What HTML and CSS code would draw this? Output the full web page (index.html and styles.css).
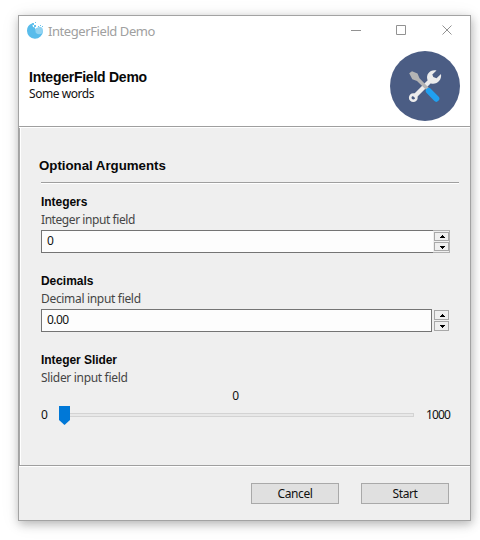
FILE: index.html
```html
<!DOCTYPE html>
<html lang="en">
<head>
<meta charset="utf-8">
<title>IntegerField Demo</title>
<link rel="stylesheet" href="styles.css">
</head>
<body>
<main class="window">
  <div class="titlebar">
    <svg class="app-icon" width="17" height="17" viewBox="0 0 17 17">
      <path d="M5 1.500C2 2.500 0 5 0 8.500a8 8 0 0 0 16 .5L15 8C11 10 8 8 8 5.500L6 5Z" fill="#58bceb"/>
      <circle cx="12.200" cy="8.500" r="3.800" fill="#91d3f2"/>
      <path d="M8 3h4v2l-3 1H8z" fill="#fff"/>
      <path d="M5 1h2v2H5zM7 3h2v2H7zM8 0h1v1H8zM13 3h1v1h-1zM11 4h1v1h-1zM15 4h1v1h-1z" fill="#69c3ed"/>
    </svg>
    <span class="caption">IntegerField Demo</span>
    <svg class="controls" width="102" height="12" viewBox="0 0 102 12" fill="none" stroke="#929292">
      <path d="M0 6.500h10M45.500 1.500h9v9h-9zM91.500 1.500l9 9M100.500 1.500l-9 9"/>
    </svg>
  </div>
  <header class="header">
    <div class="heading">
      <h1>IntegerField Demo</h1>
      <p>Some words</p>
    </div>
    <svg class="tools" width="70" height="70" viewBox="0 0 70 70">
      <circle cx="35" cy="35" r="35" fill="#4b5d84"/>
      <path d="M24 46 41 29" stroke="#ececec" stroke-width="4.500"/>
      <circle cx="23.300" cy="46.700" r="3.100" fill="none" stroke="#ececec" stroke-width="2.600"/>
      <path d="M46.500 19.500C40.500 18 35.500 23 37.500 29L41 32.500C47 34 52 29 51 23L46.500 27.200 43.300 26 42.300 23.500Z" fill="#ececec"/>
      <path d="M19.200 22.200 22 20.200 27.500 22.500 29.500 27.200 39.200 37.200 36.800 39.500 27 30 22.300 28.200Z" fill="#b4b4b4"/>
      <path d="m38.800 40 7.500 7.700" stroke="#20a0f0" stroke-width="6" stroke-linecap="round"/>
    </svg>
  </header>
  <section class="content">
    <h2>Optional Arguments</h2>
    <div class="field">
      <h3>Integers</h3>
      <p class="hint">Integer input field</p>
      <div class="number joined">
        <div class="input">0</div>
        <div class="spin">
          <svg width="15" height="9"><path d="M7 2h1v1h1v1h1v1H5V4h1V3h1z"/></svg>
          <svg width="15" height="9"><path d="M5 3h5v1H9v1H8v1H7V5H6V4H5z"/></svg>
        </div>
      </div>
    </div>
    <div class="field">
      <h3>Decimals</h3>
      <p class="hint wide">Decimal input field</p>
      <div class="number">
        <div class="input">0.00</div>
        <div class="spin">
          <svg width="15" height="9"><path d="M7 3h1v1h1v1h1v1H5V5h1V4h1z"/></svg>
          <svg width="15" height="9"><path d="M5 3h5v1H9v1H8v1H7V5H6V4H5z"/></svg>
        </div>
      </div>
    </div>
    <div class="field">
      <h3>Integer Slider</h3>
      <p class="hint wide">Slider input field</p>
      <div class="value">0</div>
      <div class="slider">
        <span class="min">0</span>
        <div class="track"><i class="thumb"></i></div>
        <span class="max">1000</span>
      </div>
    </div>
  </section>
  <footer class="footer">
    <div class="button">Cancel</div>
    <div class="button">Start</div>
  </footer>
</main>
</body>
</html>
```
FILE: styles.css
```css
* { box-sizing: border-box; }
body {
  margin: 0;
  min-height: 540px;
  padding: 15px 0 0 18px;
  background: #fff;
  color: #111;
  font: 12px/16px "Noto Sans", sans-serif;
  letter-spacing: -0.4px;
}
h1, h2, h3, p { margin: 0; }
.window {
  display: flex;
  flex-direction: column;
  width: 453px;
  height: 506px;
  border: 1px solid #a3a3a3;
  background: #efefef;
  box-shadow: 1px 3px 9px rgba(0, 0, 0, .25), 0 2px 18px rgba(0, 0, 0, .08);
}
.titlebar {
  display: flex;
  align-items: center;
  height: 30px;
  padding: 0 17px 0 8px;
  background: #fff;
}
.app-icon { display: block; flex: none; margin-top: -1px; }
.caption { flex: 1; margin-left: 4px; font-size: 13px; color: #a0a0a0; letter-spacing: -0.420px; white-space: nowrap; }
.controls { display: block; flex: none; margin-top: -2px; }
.header {
  display: flex;
  justify-content: space-between;
  height: 82px;
  padding: 5px 10px 0;
  background: #fff;
  border-bottom: 1px solid #fff;
  box-shadow: inset 0 -1px #9f9f9f;
}
.heading { padding-top: 18px; }
h1, h2, h3 { font-family: "Liberation Sans", Arial, sans-serif; font-weight: bold; color: #080808; }
h1 { font-size: 14px; line-height: 17px; letter-spacing: -0.250px; }
.heading p { letter-spacing: -0.450px; }
.tools { display: block; }
.content {
  height: 337px;
  padding: 29px 11px 0 20px;
  border-left: 1px solid #a8a8a8;
  box-shadow: inset 1px 0 #fff;
}
h2 {
  height: 27px;
  margin-left: 1px;
  font-size: 13.300px;
  line-height: 18px;
  letter-spacing: -0.030px;
  text-indent: -2px;
  border-bottom: 1px solid #fff;
  box-shadow: inset 0 -1px #9f9f9f;
}
.field { height: 79px; padding: 10px 9px 0 1px; }
h3 { font-size: 12px; line-height: 17px; letter-spacing: -0.050px; }
.hint { color: #454545; height: 19px; line-height: 18px; letter-spacing: -0.430px; }
.hint.wide { letter-spacing: -0.320px; }
.number { display: flex; height: 23px; }
.input { flex: 1; height: 23px; border: 1px solid #747474; background: #fdfdfd; padding-left: 5px; line-height: 20px; letter-spacing: -0.550px; }
.spin { display: flex; flex-direction: column; gap: 1px; padding: 1px 1px 0 2px; width: 18px; }
.spin svg { display: block; height: 10px; border: 1px solid #a8a8a8; }
.joined .input { border-right: 0; }
.joined .spin { padding: 1px 1px 0; width: 17px; border: 1px solid #b0b0b0; border-left: 0; gap: 1px; }
.joined .spin svg { height: 9px; }
.value { text-align: center; line-height: 16px; margin: 0 20px 0 0; }
.slider { display: flex; align-items: center; height: 20px; margin-top: 1px; }
.min { width: 18px; }
.track { position: relative; width: 355px; height: 4px; border: 1px solid #d3d3d3; background: #e8e8e8; }
.thumb {
  position: absolute;
  left: -1px;
  top: -8px;
  width: 11px;
  height: 19px;
  background: #0078d7;
  clip-path: polygon(0 0, 100% 0, 100% 74%, 50% 100%, 0 74%);
}
.max { margin-left: auto; letter-spacing: -0.850px; }
.footer {
  display: flex;
  justify-content: flex-end;
  gap: 22px;
  flex: 1;
  padding: 17px 21px 0 0;
  border-top: 1px solid #9f9f9f;
  box-shadow: inset 0 1px #fff;
}
.button { width: 88px; height: 21px; border: 1px solid #a9a9a9; background: #e0e0e0; text-align: center; line-height: 19px; }
```
